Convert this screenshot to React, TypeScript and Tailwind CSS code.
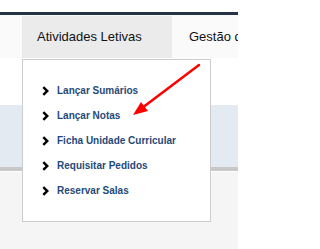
import React from "react";

const items = [
  "Lançar Sumários",
  "Lançar Notas",
  "Ficha Unidade Curricular",
  "Requisitar Pedidos",
  "Reservar Salas",
];

function Chevron() {
  return (
    <svg width="7" height="10" viewBox="0 0 7 10" className="shrink-0">
      <polyline points="1.3,1.2 5.3,5 1.3,8.8" fill="none" stroke="#000" strokeWidth="2.5" strokeLinejoin="miter" />
    </svg>
  );
}

export default function App() {
  return (
    <div className="relative w-[238px] h-[249px] overflow-hidden bg-white font-['Liberation_Sans',Arial,sans-serif]">
      <div className="h-[12px] bg-white" />
      <div className="h-[3px] bg-[#243446]" />
      <div className="h-[43px] bg-[#fafafa] flex pl-[22px] pt-px">
        <div className="w-[150px] shrink-0 h-[42px] bg-[#ebebeb] flex items-center pl-[15px] text-[13px] text-[#111]">
          Atividades Letivas
        </div>
        <div className="shrink-0 flex items-center pl-[17px] text-[13px] text-[#111] whitespace-nowrap">
          Gestão de
        </div>
      </div>
      <div className="h-[47px] bg-white" />
      <div className="h-[62px] bg-[#e4eaf2]" />
      <div className="h-[4px] bg-[#c8c8c8]" />
      <div className="h-px bg-white" />
      <div className="h-[80px] bg-[#f5f5f5]" />

      <div className="absolute left-[22px] top-[59px] w-[189px] h-[163px] bg-white border border-[#cccccc] pt-[18px]">
        {items.map((t) => (
          <div key={t} className="h-[25px] flex items-center pl-[19px] gap-[8px]">
            <Chevron />
            <span className="text-[10px] font-bold text-[#1f4a78] whitespace-nowrap">{t}</span>
          </div>
        ))}
      </div>

      <svg className="absolute left-0 top-0" width="238" height="249" viewBox="0 0 238 249">
        <line x1="199" y1="65" x2="144" y2="106.5" stroke="#ff0000" strokeWidth="2.5" strokeLinecap="round" />
        <polygon points="133,115 141,102 148,111" fill="#ff0000" />
      </svg>
    </div>
  );
}
